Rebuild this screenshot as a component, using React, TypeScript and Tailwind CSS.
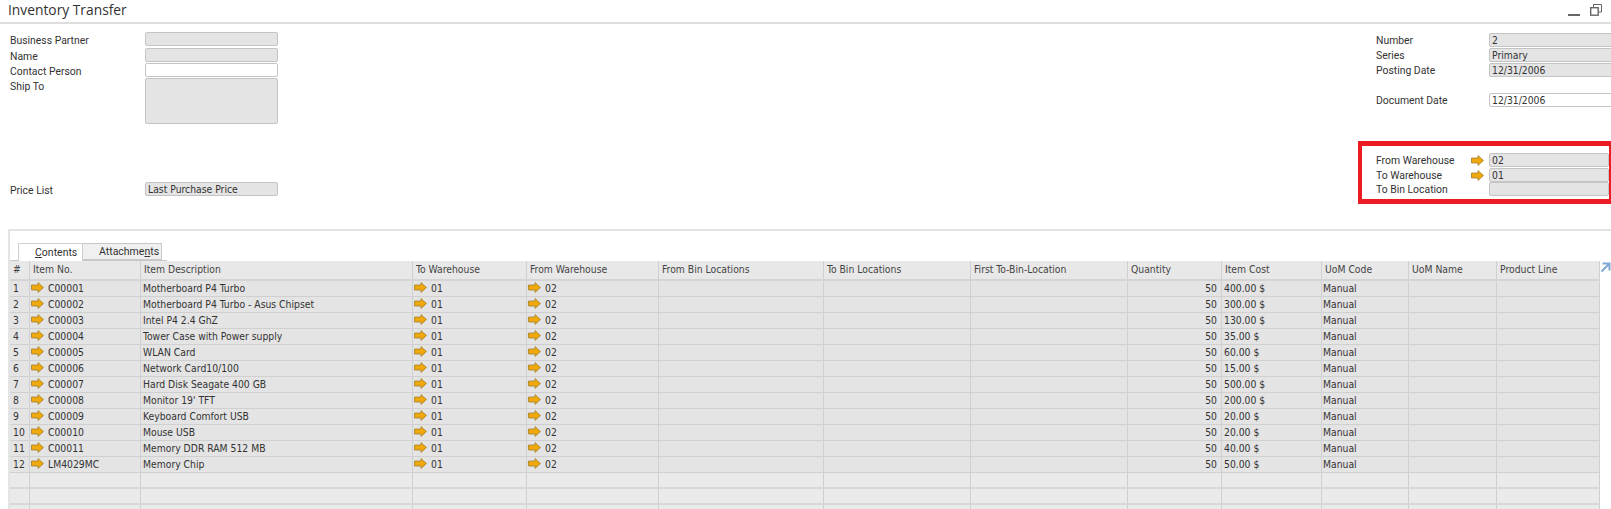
const font = "font-['Roboto',sans-serif]";
const dataFont = "font-['DejaVu_Sans_Condensed','DejaVu_Sans',sans-serif]";

function Arrow() {
  return (
    <svg width="13" height="11" viewBox="0 0 13 11" className="shrink-0">
      <path d="M0.5 3H7V0.6L12.5 5.5L7 10.4V8H0.5Z" fill="#f0a80c" stroke="#a08030" strokeWidth="0.8" />
    </svg>
  );
}

function Input({ w, h = 14, white, children }: { w: string; h?: number; white?: boolean; children?: React.ReactNode }) {
  return (
    <div
      className={`${w} ${dataFont} rounded-[2px] border border-[#c4c4c4] pl-[2px] text-[10.3px] leading-[13px] text-[#333] overflow-hidden whitespace-nowrap ${white ? "bg-white" : "bg-[#e4e4e4]"}`}
      style={{ height: h }}
    >
      {children}
    </div>
  );
}

function LeftRow({ label, mt, h, white, value }: { label: string; mt: string; h?: number; white?: boolean; value?: string }) {
  return (
    <div className={`flex ${mt}`}>
      <div className="w-[135px] h-[14px] pt-[2px] text-[10.4px] leading-[14px] text-[#333] whitespace-nowrap">{label}</div>
      <Input w="w-[133px] shrink-0" h={h} white={white}>{value}</Input>
    </div>
  );
}

function RightRow({ label, mt, white, value, arrow }: { label: string; mt: string; white?: boolean; value?: string; arrow?: boolean }) {
  return (
    <div className={`flex ${mt}`}>
      <div className="w-[95px] shrink-0 h-[14px] pt-[1px] text-[10.4px] leading-[14px] text-[#333] whitespace-nowrap">{label}</div>
      <div className="w-[18px] shrink-0 flex items-center">{arrow && <Arrow />}</div>
      <Input w="flex-1 min-w-0" white={white}>{value}</Input>
    </div>
  );
}

const columns = [
  { name: "#", w: "w-[20px]" },
  { name: "Item No.", w: "w-[111px]" },
  { name: "Item Description", w: "w-[272px]" },
  { name: "To Warehouse", w: "w-[114px]" },
  { name: "From Warehouse", w: "w-[132px]" },
  { name: "From Bin Locations", w: "w-[165px]" },
  { name: "To Bin Locations", w: "w-[147px]" },
  { name: "First To-Bin-Location", w: "w-[157px]" },
  { name: "Quantity", w: "w-[94px]" },
  { name: "Item Cost", w: "w-[100px]" },
  { name: "UoM Code", w: "w-[87px]" },
  { name: "UoM Name", w: "w-[88px]" },
  { name: "Product Line", w: "w-[103px]" },
];

const items: [string, string, string][] = [
  ["C00001", "Motherboard P4 Turbo", "400.00 $"],
  ["C00002", "Motherboard P4 Turbo - Asus Chipset", "300.00 $"],
  ["C00003", "Intel P4 2.4 GhZ", "130.00 $"],
  ["C00004", "Tower Case with Power supply", "35.00 $"],
  ["C00005", "WLAN Card", "60.00 $"],
  ["C00006", "Network Card10/100", "15.00 $"],
  ["C00007", "Hard Disk Seagate 400 GB", "500.00 $"],
  ["C00008", "Monitor 19' TFT", "200.00 $"],
  ["C00009", "Keyboard Comfort USB", "20.00 $"],
  ["C00010", "Mouse USB", "20.00 $"],
  ["C00011", "Memory DDR RAM 512 MB", "40.00 $"],
  ["LM4029MC", "Memory Chip", "50.00 $"],
];

function Cell({ i, children, className = "" }: { i: number; children?: React.ReactNode; className?: string }) {
  return (
    <div className={`${columns[i].w} shrink-0 h-full border-r border-[#d0d0d0] flex items-center overflow-hidden whitespace-nowrap pb-[2px] ${className}`}>
      {children}
    </div>
  );
}

function LinkCell({ i, value }: { i: number; value: string }) {
  return (
    <Cell i={i} className="pl-[1px]">
      <Arrow />
      <span className="ml-[4px]">{value}</span>
    </Cell>
  );
}

export default function App() {
  return (
    <div className={`${font} w-[1611px] h-[509px] overflow-hidden bg-white text-[#333]`}>
      <div className="h-[24px] border-b-2 border-[#dedede] flex items-center justify-between pl-[8px] pr-[9px] pb-[2px]">
        <div className="font-['Open_Sans',sans-serif] text-[13.8px] leading-[20px] text-[#333]">Inventory Transfer</div>
        <div className="flex items-center gap-[10px]">
          <svg width="12" height="14" viewBox="0 0 12 14"><rect x="0" y="11" width="12" height="2" fill="#666" /></svg>
          <svg width="12" height="12" viewBox="0 0 12 12" fill="none" stroke="#666" strokeWidth="1">
            <rect x="0.7" y="3.7" width="7.5" height="7.5" fill="white" strokeWidth="1.4" />
            <path d="M3.5 3V0.5H11.5V8H8.5" />
          </svg>
        </div>
      </div>

      <div className="h-[205px] flex justify-between">
        <div className="pl-[10px] pt-[8px]">
          <LeftRow label="Business Partner" mt="mt-0" />
          <LeftRow label="Name" mt="mt-[2px]" />
          <LeftRow label="Contact Person" mt="mt-[1px]" white />
          <LeftRow label="Ship To" mt="mt-[1px]" h={46} />
          <LeftRow label="Price List" mt="mt-[58px]" value="Last Purchase Price" />
        </div>
        <div className="w-[253px] pt-[9px]">
          <div className="pl-[18px] w-[255px]">
            <RightRow label="Number" mt="mt-0" value="2" />
            <RightRow label="Series" mt="mt-[1px]" value="Primary" />
            <RightRow label="Posting Date" mt="mt-[1px]" value="12/31/2006" />
            <RightRow label="Document Date" mt="mt-[16px]" white value="12/31/2006" />
          </div>
          <div className="mt-[34px] h-[63px] border-[5px] border-l-4 border-r-2 border-[#ed1c24] pl-[14px] pt-[7px]">
            <RightRow label="From Warehouse" mt="mt-0" value="02" arrow />
            <RightRow label="To Warehouse" mt="mt-[1px]" value="01" arrow />
            <RightRow label="To Bin Location" mt="mt-0" />
          </div>
        </div>
      </div>

      <div className="border-t-2 border-l-2 border-[#e4e4e4] ml-[8px] h-[280px] flex flex-col">
        <div className="h-[30px] flex items-end pl-[8px] border-b border-[#c8c8c8] text-[10.5px] shrink-0 w-[157px]">
          <div className="h-[18px] w-[65px] pl-[16px] bg-white border border-b-0 border-[#d0d0d0] flex items-center -mb-px relative">
            <span><span className="underline">C</span>ontents</span>
          </div>
          <div className="h-[17px] w-[79px] pl-[16px] bg-[#f0f0f0] border border-l-0 border-[#c8c8c8] flex items-center">
            <span>Attachme<span className="underline">n</span>ts</span>
          </div>
        </div>
        <div className={`${dataFont} relative text-[10.3px] leading-[12px] w-[1590px] bg-[#e4e4e4]`}>
          <div className="flex h-[20px] bg-[#e8e8e8] border-b-2 border-[#d4d4d4]">
            {columns.map((c, i) => (
              <Cell key={c.name} i={i} className="pl-[3px] text-[#444]">{c.name}</Cell>
            ))}
          </div>
          {items.map(([no, desc, cost], r) => (
            <div key={no} className="flex h-[16px] border-b border-[#d0d0d0]">
              <Cell i={0} className="pl-[3px]">{r + 1}</Cell>
              <LinkCell i={1} value={no} />
              <Cell i={2} className="pl-[2px]">{desc}</Cell>
              <LinkCell i={3} value="01" />
              <LinkCell i={4} value="02" />
              <Cell i={5} />
              <Cell i={6} />
              <Cell i={7} />
              <Cell i={8} className="justify-end pr-[4px]">50</Cell>
              <Cell i={9} className="pl-[2px]">{cost}</Cell>
              <Cell i={10} className="pl-[1px]">Manual</Cell>
              <Cell i={11} />
              <Cell i={12} />
            </div>
          ))}
          {[0, 1, 2].map((r) => (
            <div key={r} className="flex h-[16px] border-b-2 border-[#d8d8d8] bg-[#eaeaea]">
              {columns.map((c, i) => (
                <Cell key={c.name} i={i} />
              ))}
            </div>
          ))}
          <svg width="11" height="11" viewBox="0 0 11 11" className="absolute left-[1590px] top-[1px]" fill="none" stroke="#7fa8d4" strokeWidth="2">
            <path d="M2.5 1.5H9.5V8.5M9 2L1.5 9.5" />
          </svg>
        </div>
      </div>
    </div>
  );
}
